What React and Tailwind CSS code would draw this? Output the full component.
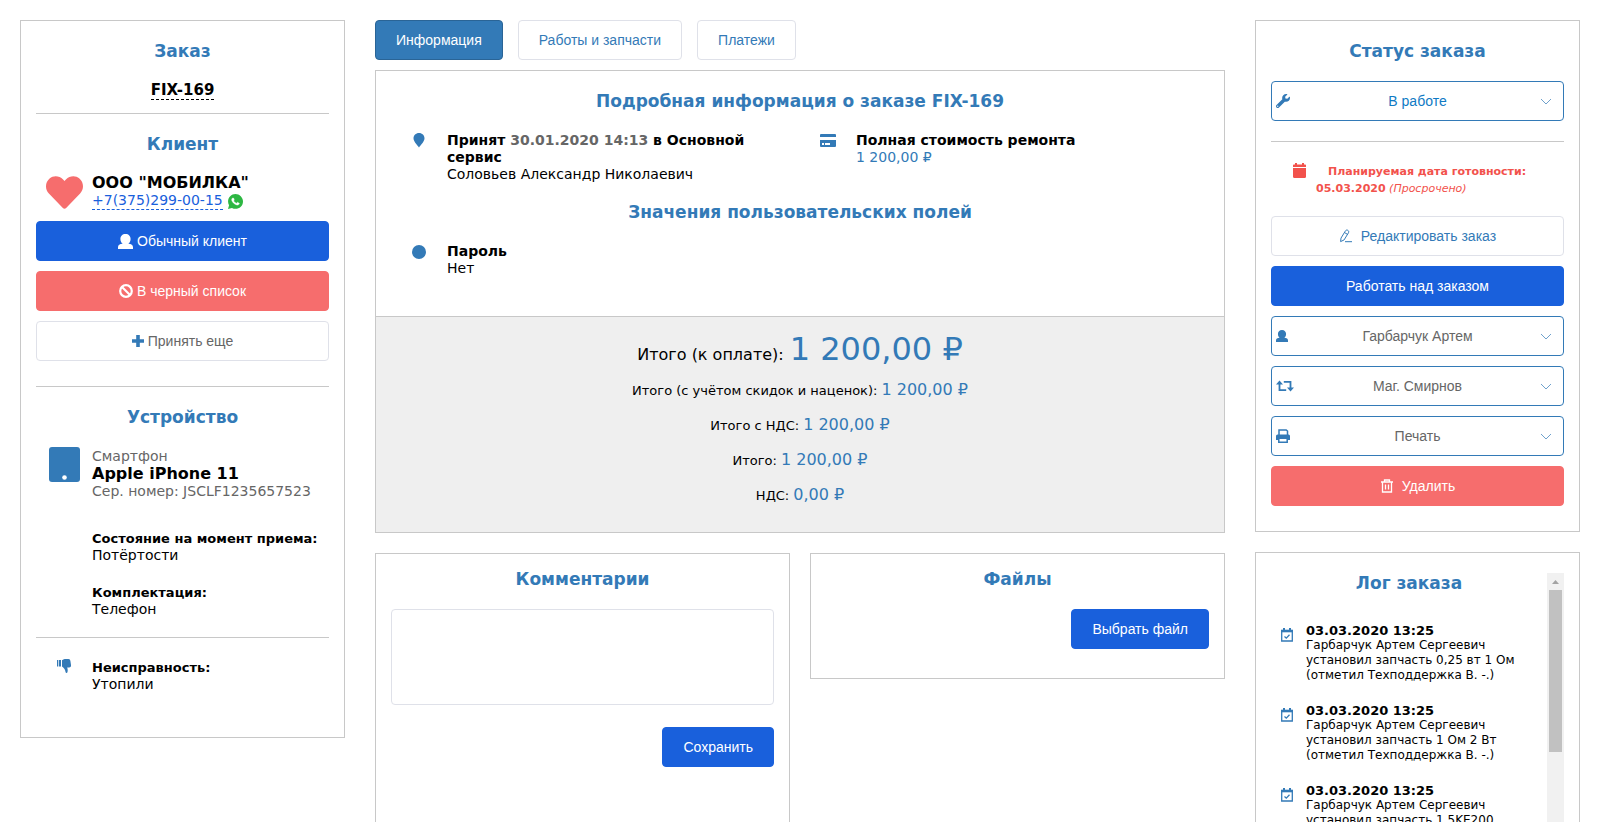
import React from 'react';
import { FaHeart, FaWrench } from 'react-icons/fa';

function PersonIcon({ className }) {
  return (
    <svg viewBox="0 0 15 15" fill="currentColor" aria-hidden="true" className={className}>
      <path d="M7.500 0C10.700 0 12.600 2.100 12.600 5c0 2.100-.9 3.800-2.300 4.800 3.100.3 4.700 1.200 4.700 3.400V15H0v-1.800c0-2.200 1.600-3.100 4.700-3.400C3.300 8.800 2.400 7.100 2.400 5 2.400 2.100 4.300 0 7.500 0z" />
    </svg>
  );
}

function WhatsappIcon({ className }) {
  return (
    <svg viewBox="0 32 448 448" aria-hidden="true" className={className}>
      <path
        fill="currentColor"
        d="M380.900 97.100C339 55.100 283.200 32 223.900 32c-122.400 0-222 99.600-222 222 0 39.100 10.200 77.300 29.600 111L0 480l117.700-30.900c32.400 17.700 68.900 27 106.100 27h.1c122.300 0 224.100-99.600 224.100-222 0-59.300-25.200-115-67.100-157z"
      />
      <path
        fill="#fff"
        stroke="#fff"
        strokeWidth="14"
        d="M325.100 300.500c-5.500-2.800-32.800-16.200-37.900-18-5.100-1.900-8.800-2.800-12.500 2.800-3.700 5.600-14.300 18-17.600 21.800-3.200 3.700-6.500 4.200-12 1.400-32.600-16.300-54-29.100-75.500-66-5.700-9.800 5.700-9.100 16.300-30.300 1.800-3.700.9-6.900-.5-9.700-1.400-2.800-12.500-30.100-17.100-41.200-4.500-10.800-9.100-9.300-12.500-9.500-3.200-.2-6.900-.2-10.600-.2-3.700 0-9.700 1.400-14.800 6.900-5.100 5.600-19.400 19-19.400 46.300 0 27.300 19.900 53.700 22.600 57.400 2.800 3.700 39.100 59.700 94.800 83.800 35.200 15.200 49 16.500 66.600 13.900 10.700-1.600 32.800-13.400 37.400-26.400 4.600-13 4.600-24.100 3.200-26.400-1.300-2.500-5-3.900-10.500-6.600z"
      />
    </svg>
  );
}

function BanIcon({ className }) {
  return (
    <svg viewBox="0 0 14 14" fill="none" stroke="currentColor" strokeWidth="2.200" aria-hidden="true" className={className}>
      <circle cx="7" cy="7" r="5.800" />
      <path d="M3 3l8 8" />
    </svg>
  );
}

function PlusIcon({ className }) {
  return (
    <svg viewBox="0 0 12 12" fill="currentColor" aria-hidden="true" className={className}>
      <path d="M4.200 0h3.600v4.200H12v3.600H7.800V12H4.200V7.800H0V4.200h4.200z" />
    </svg>
  );
}

function TabletIcon({ className }) {
  return (
    <svg viewBox="0 0 31 35" aria-hidden="true" className={className}>
      <rect width="31" height="35" rx="3" fill="currentColor" />
      <circle cx="15.500" cy="30.500" r="2.300" fill="#fff" />
    </svg>
  );
}

function ThumbDownIcon({ className }) {
  return (
    <svg viewBox="0 0 14 14" fill="currentColor" aria-hidden="true" className={className}>
      <path d="M0 1h1.300v6.500H0zM2 1h2v6.500H2zM5 1.200C6.300.5 7.500 0 9 0h2.500c1.200 0 1.700.8 1.900 2l.6 4c.2 1.500-.4 2.500-1.800 2.500h-2c.5 1.500.7 3 .3 4.500-.3 1.300-1.600 1.300-1.900.2C8.200 11 7.300 9 5 7.500z" />
    </svg>
  );
}

function PinIcon({ className }) {
  return (
    <svg viewBox="0 0 12 15" fill="currentColor" aria-hidden="true" className={className}>
      <path d="M6 0c3.200 0 5.500 2.300 5.500 5.300C11.500 8.500 8.200 11.500 6 14.500 3.800 11.500.5 8.500.5 5.300.5 2.300 2.800 0 6 0z" />
    </svg>
  );
}

function CardIcon({ className }) {
  return (
    <svg viewBox="0 0 16 13" fill="currentColor" aria-hidden="true" className={className}>
      <path d="M1 0h14a1 1 0 0 1 1 1v2H0V1a1 1 0 0 1 1-1z" />
      <path fillRule="evenodd" d="M0 6h16v6a1 1 0 0 1-1 1H1a1 1 0 0 1-1-1zm2 3v2h2V9zm3 0v2h5V9z" />
    </svg>
  );
}

function CalendarIcon({ className }) {
  return (
    <svg viewBox="0 0 13 15" fill="currentColor" aria-hidden="true" className={className}>
      <path d="M2 0h2v1.500h5V0h2v1.500h1.200c.5 0 .8.3.8.8V4H0V2.300c0-.5.3-.8.8-.8H2z" />
      <path d="M0 5h13v8.800c0 .7-.4 1.200-1.100 1.200H1.100C.4 15 0 14.500 0 13.800z" />
    </svg>
  );
}

function CalendarCheckIcon({ className }) {
  return (
    <svg viewBox="0 0 12 14" fill="none" stroke="currentColor" aria-hidden="true" className={className}>
      <path d="M.7 3h10.600v10H.7z" strokeWidth="1.300" />
      <path d="M0 3h12" strokeWidth="2.600" />
      <path d="M3 0v3M9 0v3" strokeWidth="2" />
      <path d="M3.500 8.500l1.800 1.700 3.200-3.400" strokeWidth="1.300" />
    </svg>
  );
}

function EditIcon({ className }) {
  return (
    <svg viewBox="0 0 14 14" fill="none" stroke="currentColor" strokeLinejoin="round" aria-hidden="true" className={className}>
      <path d="M6.300 2.100c.6-1 1.500-1.400 2.500-.8s1.200 1.600.6 2.600l-4.300 7L1.600 12.600l.4-3.500zM5.500 3.500l3 1.900M6 12.700h7" />
    </svg>
  );
}

function TrashIcon({ className }) {
  return (
    <svg viewBox="0 0 14 14" fill="none" stroke="currentColor" aria-hidden="true" className={className}>
      <path d="M1 3h12M4.500 3V1h5v2M2.500 3v10h9V3M5.500 5.500v5M8.500 5.500v5" strokeWidth="1.300" />
    </svg>
  );
}

function TransferIcon({ className }) {
  return (
    <svg viewBox="0 0 18 12" fill="none" stroke="currentColor" aria-hidden="true" className={className}>
      <path d="M3.500 3v7.200h6.700M7.800 1.800h6.700V9" strokeWidth="1.800" />
      <path d="M0 4.500L3.500.5 7 4.500zM11 7.500h7l-3.500 4z" fill="currentColor" stroke="none" />
    </svg>
  );
}

function PrinterIcon({ className }) {
  return (
    <svg viewBox="0 0 14 14" aria-hidden="true" className={className}>
      <path d="M3 7V.9h7.200L11.500 2v5" fill="none" stroke="currentColor" strokeWidth="1.500" />
      <path d="M1.500 5.500h11A1.500 1.500 0 0 1 14 7v4H0V7a1.500 1.500 0 0 1 1.500-1.500z" fill="currentColor" />
      <path d="M2.800 9.300h8.400v3.900H2.800z" fill="#fff" stroke="currentColor" strokeWidth="1.500" />
    </svg>
  );
}

function ChevronIcon({ className }) {
  return (
    <svg viewBox="0 0 12 7" fill="none" stroke="currentColor" aria-hidden="true" className={className}>
      <path d="M1 1l5 5 5-5" />
    </svg>
  );
}

const BUTTON = "flex h-10 items-center justify-center rounded border px-5 font-['Liberation_Sans',sans-serif] text-sm";
const PRIMARY = 'border-[#1960dc] bg-[#1960dc] text-white';
const DANGER = 'border-[#f66d6d] bg-[#f66d6d] text-white';
const OUTLINE = 'border-[#dfe1e9] bg-white';

function Button({ className = '', children, ...rest }) {
  return (
    <button type="button" className={`${BUTTON} ${className}`} {...rest}>
      {children}
    </button>
  );
}

function Card({ className = '', children }) {
  return <section className={`border border-[#c8c8c8] bg-white px-[15px] ${className}`}>{children}</section>;
}

function Title({ className = '', children }) {
  return <h2 className={`text-center text-[17px] leading-5 font-bold text-[#337ab7] ${className}`}>{children}</h2>;
}

function Divider({ className = '' }) {
  return <hr className={`border-[#c8c8c8] ${className}`} />;
}

function Choice({ label, value, icon, tone }) {
  return (
    <div className={`grid items-center ${tone}`}>
      <select
        aria-label={label}
        defaultValue={value}
        className={`${BUTTON} col-start-1 row-start-1 w-full appearance-none border-[#337ab7] bg-white text-center [text-align-last:center]`}
      >
        <option>{value}</option>
      </select>
      <span className="pointer-events-none col-start-1 row-start-1 flex items-center justify-between pr-3 pl-[5px] text-[#337ab7]">
        {icon}
        <ChevronIcon className="h-[7px] w-3 opacity-70" />
      </span>
    </div>
  );
}

function OrderPanel() {
  return (
    <Card className="pb-11">
      <Title className="mt-5">Заказ</Title>
      <p className="mt-5 text-center text-[15px] leading-[18px] font-bold">
        <a href="#order" className="inline-block border-b border-dashed border-black">FIX-169</a>
      </p>
      <Divider className="mt-[13px]" />

      <Title className="mt-5">Клиент</Title>
      <div className="mt-5 flex">
        <div className="flex w-14 shrink-0 justify-center">
          <FaHeart className="h-[37px] w-[37px] text-[#f66d6d]" />
        </div>
        <div className="min-w-0">
          <p className="text-base leading-[18px] font-bold">ООО "МОБИЛКА"</p>
          <p className="flex items-center gap-[5px] text-sm leading-[17px]">
            <a href="tel:+73752990015" className="border-b border-dashed border-[#1960dc] text-[#1960dc]">+7(375)299-00-15</a>
            <WhatsappIcon className="h-[15px] w-[15px] text-[#2db742]" />
          </p>
        </div>
      </div>
      <div className="mt-[10px] flex flex-col gap-[10px]">
        <Button className={`${PRIMARY} gap-1`}>
          <PersonIcon className="h-[15px] w-[15px]" />
          Обычный клиент
        </Button>
        <Button className={`${DANGER} gap-1`}>
          <BanIcon className="h-[14px] w-[14px]" />
          В черный список
        </Button>
        <Button className={`${OUTLINE} gap-1 text-[#666]`}>
          <PlusIcon className="h-3 w-3 text-[#337ab7]" />
          Принять еще
        </Button>
      </div>
      <Divider className="mt-[25px]" />

      <Title className="mt-5">Устройство</Title>
      <div className="mt-5 flex">
        <div className="flex w-14 shrink-0 justify-center">
          <TabletIcon className="h-[35px] w-[31px] text-[#337ab7]" />
        </div>
        <div className="min-w-0">
          <p className="pt-px text-sm leading-[17px] text-[#666]">Смартфон</p>
          <p className="text-base leading-[18px] font-bold">Apple iPhone 11</p>
          <p className="text-sm leading-[17px] text-[#666]">Сер. номер: JSCLF1235657523</p>
        </div>
      </div>
      <dl className="mt-[30px] ml-14 text-sm leading-[17px]">
        <dt className="text-[13px] font-bold whitespace-nowrap">Состояние на момент приема:</dt>
        <dd>Потёртости</dd>
        <dt className="mt-5 text-[13px] font-bold">Комплектация:</dt>
        <dd>Телефон</dd>
      </dl>
      <Divider className="mt-[19px]" />
      <div className="mt-[21px] flex">
        <div className="flex w-14 shrink-0 justify-center">
          <ThumbDownIcon className="h-[14px] w-[14px] text-[#337ab7]" />
        </div>
        <dl className="text-sm leading-[17px]">
          <dt className="text-[13px] font-bold">Неисправность:</dt>
          <dd>Утопили</dd>
        </dl>
      </div>
    </Card>
  );
}

function InfoItem({ icon, children }) {
  return (
    <div className="flex">
      <div className="flex h-[17px] w-14 shrink-0 items-center justify-center text-[#337ab7]">{icon}</div>
      <div className="min-w-0 text-sm leading-[17px]">{children}</div>
    </div>
  );
}

function TotalRow({ label, value }) {
  return (
    <p className="flex h-[35px] items-baseline justify-center gap-1">
      <span className="text-[13px] leading-none">{label}</span>
      <span className="text-base leading-[35px] text-[#337ab7]">{value}</span>
    </p>
  );
}

function InfoPanel() {
  return (
    <section className="border border-[#c8c8c8] bg-white">
      <div className="px-[15px] pb-[39px]">
        <Title className="mt-5">Подробная информация о заказе FIX-169</Title>
        <div className="mt-[21px] grid grid-cols-2">
          <InfoItem icon={<PinIcon className="h-[15px] w-3" />}>
            <p className="pr-10 font-bold">
              Принят <span className="text-[#666]">30.01.2020 14:13</span> в Основной сервис
            </p>
            <p>Соловьев Александр Николаевич</p>
          </InfoItem>
          <InfoItem icon={<CardIcon className="h-[13px] w-4" />}>
            <p className="font-bold">Полная стоимость ремонта</p>
            <p className="text-[#337ab7]">1 200,00 ₽</p>
          </InfoItem>
        </div>
        <Title className="mt-[19px]">Значения пользовательских полей</Title>
        <div className="mt-[21px] grid grid-cols-2">
          <InfoItem icon={<span className="h-[14px] w-[14px] rounded-full bg-[#337ab7]" />}>
            <p className="font-bold">Пароль</p>
            <p>Нет</p>
          </InfoItem>
        </div>
      </div>
      <div className="border-t border-[#c8c8c8] bg-[#efefef] pt-[10px] pb-5">
        <p className="flex h-[45px] items-baseline justify-center gap-[6px]">
          <span className="text-base leading-none">Итого (к оплате):</span>
          <span className="text-[32px] leading-[45px] text-[#337ab7]">1 200,00 ₽</span>
        </p>
        <TotalRow label="Итого (с учётом скидок и наценок):" value="1 200,00 ₽" />
        <TotalRow label="Итого с НДС:" value="1 200,00 ₽" />
        <TotalRow label="Итого:" value="1 200,00 ₽" />
        <TotalRow label="НДС:" value="0,00 ₽" />
      </div>
    </section>
  );
}

function StatusPanel() {
  return (
    <Card className="pb-[25px]">
      <Title className="mt-5">Статус заказа</Title>
      <div className="mt-5">
        <Choice label="Статус" value="В работе" tone="text-[#0f7ac4]" icon={<FaWrench className="h-[14px] w-[14px]" />} />
      </div>
      <Divider className="mt-5" />
      <div className="mt-[21px] ml-[10px] flex text-[#f2524c]">
        <CalendarIcon className="mr-[10px] ml-3 h-[15px] w-[13px] shrink-0" />
        <p className="indent-3 text-[11px] leading-[17px]">
          <b>Планируемая дата готовности: 05.03.2020</b> <i>(Просрочено)</i>
        </p>
      </div>
      <div className="mt-[19px] flex flex-col gap-[10px]">
        <Button className={`${OUTLINE} gap-2 text-[#337ab7]`}>
          <EditIcon className="h-[14px] w-[14px]" />
          Редактировать заказ
        </Button>
        <Button className={PRIMARY}>Работать над заказом</Button>
        <Choice label="Исполнитель" value="Гарбарчук Артем" tone="text-[#666]" icon={<PersonIcon className="h-3 w-3" />} />
        <Choice label="Магазин" value="Маг. Смирнов" tone="text-[#666]" icon={<TransferIcon className="h-3 w-[18px]" />} />
        <Choice label="Документ" value="Печать" tone="text-[#666]" icon={<PrinterIcon className="h-[14px] w-[14px]" />} />
        <Button className={`${DANGER} gap-2`}>
          <TrashIcon className="h-[14px] w-[14px]" />
          Удалить
        </Button>
      </div>
    </Card>
  );
}

const LOG = [
  'установил запчасть 0,25 вт 1 Ом (отметил Техподдержка В. -.)',
  'установил запчасть 1 Ом 2 Вт (отметил Техподдержка В. -.)',
  'установил запчасть 1.5KE200 (отметил Техподдержка В. -.)',
];

function LogPanel() {
  return (
    <Card className="flex py-5">
      <div className="min-w-0 flex-1">
        <Title>Лог заказа</Title>
        <ul className="mt-[30px] flex flex-col gap-5 pl-[10px]">
          {LOG.map((text) => (
            <li key={text} className="flex gap-[13px] text-xs leading-[15px]">
              <CalendarCheckIcon className="mt-[5px] h-[14px] w-3 shrink-0 text-[#337ab7]" />
              <div className="pr-3">
                <p className="text-[13px] font-bold">03.03.2020 13:25</p>
                <p>Гарбарчук Артем Сергеевич</p>
                <p>{text}</p>
              </div>
            </li>
          ))}
        </ul>
      </div>
      <div aria-hidden="true" className="flex w-[17px] flex-col items-center bg-[#f1f1f1]">
        <span className="flex h-[17px] items-center justify-center">
          <svg viewBox="0 0 7 4" className="h-1 w-[7px] fill-[#a3a3a3]"><path d="M0 4L3.500 0 7 4z" /></svg>
        </span>
        <span className="h-[162px] w-[13px] bg-[#c1c1c1]" />
      </div>
    </Card>
  );
}

export default function App() {
  return (
    <main className="grid h-screen grid-cols-[13fr_34fr_13fr] items-start gap-[30px] overflow-hidden bg-white p-5 font-['DejaVu_Sans',sans-serif] text-black">
      <OrderPanel />
      <div>
        <nav className="mb-[10px] flex gap-[15px]">
          <Button className="border-[#2a6496] bg-[#337ab7] text-white">Информация</Button>
          <Button className={`${OUTLINE} text-[#337ab7]`}>Работы и запчасти</Button>
          <Button className={`${OUTLINE} text-[#337ab7]`}>Платежи</Button>
        </nav>
        <InfoPanel />
        <div className="mt-5 grid grid-cols-2 items-start gap-5">
          <Card className="pb-20">
            <Title className="mt-[15px]">Комментарии</Title>
            <textarea aria-label="Комментарии" className="mt-5 block h-24 w-full resize-none rounded border border-[#dfe1e9] p-2 text-sm" />
            <div className="mt-[22px] flex justify-end">
              <Button className={PRIMARY}>Сохранить</Button>
            </div>
          </Card>
          <Card className="pb-[29px]">
            <Title className="mt-[15px]">Файлы</Title>
            <div className="mt-5 flex justify-end">
              <Button className={PRIMARY}>Выбрать файл</Button>
            </div>
          </Card>
        </div>
      </div>
      <div className="flex flex-col gap-5">
        <StatusPanel />
        <LogPanel />
      </div>
    </main>
  );
}
